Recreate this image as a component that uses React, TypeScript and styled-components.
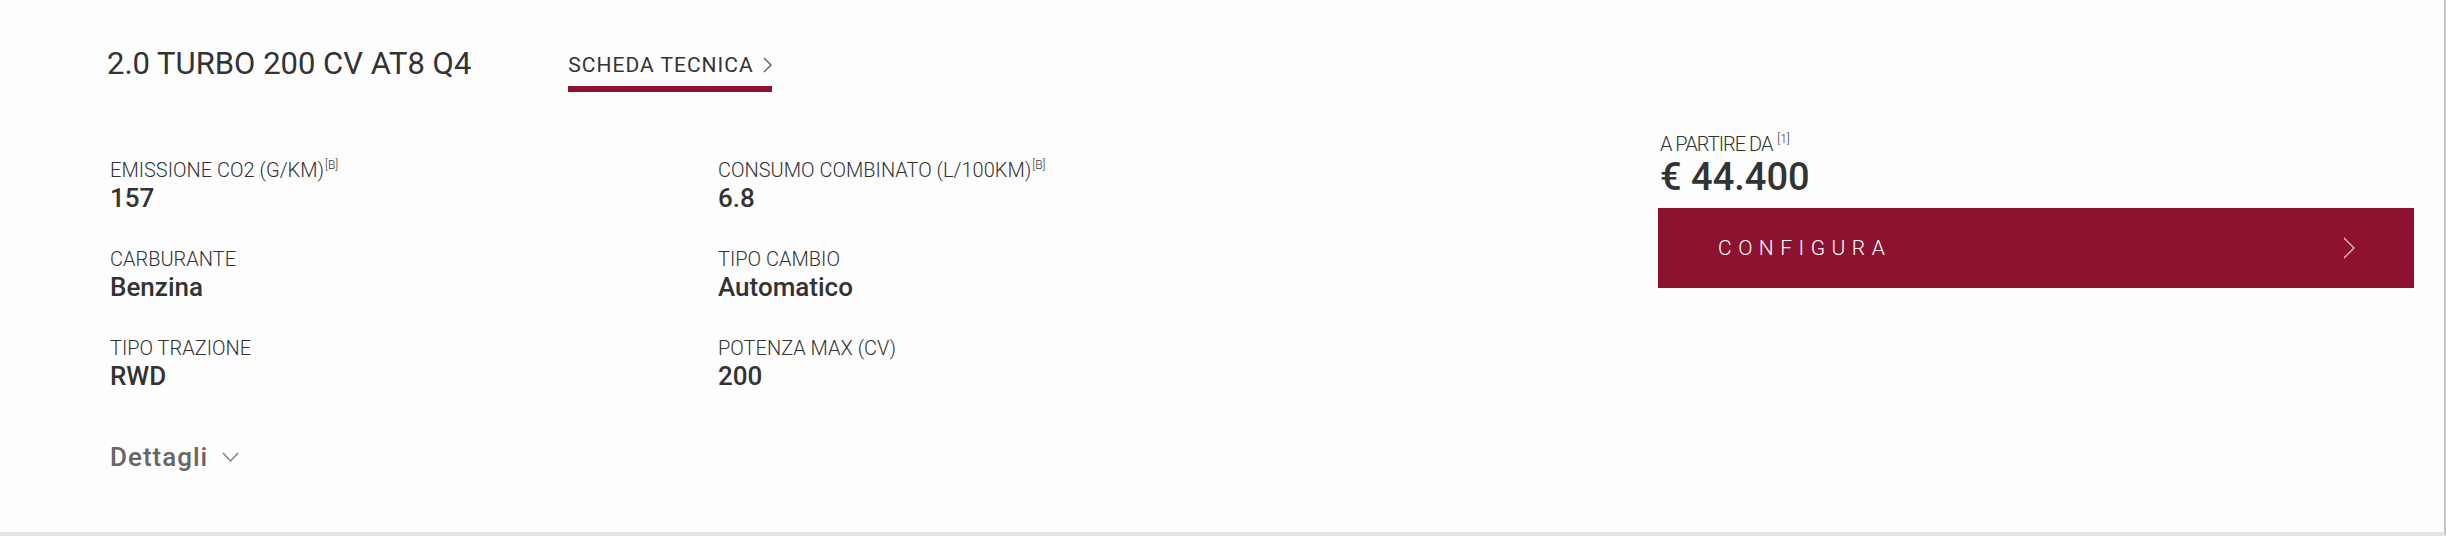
import React from "react";
import styled, { createGlobalStyle } from "styled-components";

const Global = createGlobalStyle`
  html, body { margin: 0; padding: 0; background: #fff; }
  body { font-family: Roboto, "Liberation Sans", Arial, sans-serif; color: #333; }
  * { box-sizing: border-box; }
`;

const Page = styled.div`
  width: 2446px;
  height: 536px;
  background: #fdfdfd;
  border-right: 2px solid #c4c4c4;
  border-bottom: 4px solid #e4e4e4;
  display: flex;
  padding: 0 30px 0 107px;
`;

const Left = styled.div`
  flex: 1;
  display: flex;
  flex-direction: column;
  padding-top: 45px;
`;

const HeaderRow = styled.div`
  display: flex;
  align-items: flex-start;
  gap: 97px;
`;

const Title = styled.h1`
  margin: 0;
  font-size: 31px;
  line-height: 37px;
  font-weight: 400;
  color: #333;
  white-space: nowrap;
`;

const TabLink = styled.a`
  margin-top: 7px;
  display: flex;
  align-items: center;
  gap: 9px;
  padding-bottom: 8px;
  border-bottom: 6px solid #8c1230;
  font-size: 21px;
  line-height: 26px;
  font-weight: 400;
  letter-spacing: 1px;
  color: #333;
  text-decoration: none;
  white-space: nowrap;
`;

const Specs = styled.div`
  margin-top: 61px;
  margin-left: 3px;
  display: grid;
  grid-template-columns: 608px 608px;
  row-gap: 33px;
`;

const Spec = styled.div`
  display: flex;
  flex-direction: column;
`;

const Label = styled.div<{ $tight?: boolean }>`
  font-size: 20px;
  line-height: 24px;
  font-weight: 300;
  color: #333;
  letter-spacing: ${(p) => (p.$tight ? "-1px" : "0")};
  white-space: nowrap;
`;

const Sup = styled.sup`
  font-size: 12px;
  letter-spacing: 0;
  margin-left: 1px;
`;

const Value = styled.div`
  font-size: 26px;
  line-height: 32px;
  font-weight: 500;
  color: #333;
`;

const Details = styled.button`
  margin-top: 49px;
  margin-left: 3px;
  align-self: flex-start;
  display: flex;
  align-items: center;
  gap: 14px;
  background: none;
  border: 0;
  padding: 0;
  font-family: inherit;
  font-size: 26px;
  line-height: 32px;
  font-weight: 500;
  letter-spacing: 1px;
  color: #666;
  cursor: pointer;
`;

const Right = styled.div`
  width: 756px;
  padding-top: 128px;
  display: flex;
  flex-direction: column;
`;

const PriceLabel = styled(Label)`
  margin-left: 2px;
  line-height: 22px;
`;

const Price = styled.div`
  margin-left: 2px;
  font-size: 38px;
  line-height: 44px;
  font-weight: 500;
  color: #333;
`;

const ConfigButton = styled.button`
  margin-top: 9px;
  height: 80px;
  width: 100%;
  background: #8c1230;
  border: 0;
  display: flex;
  align-items: center;
  justify-content: space-between;
  padding: 0 59px 0 60px;
  font-family: inherit;
  font-size: 21px;
  font-weight: 300;
  letter-spacing: 6.5px;
  color: #fff;
  cursor: pointer;
`;

const Chevron = ({ w, h, color, sw }: { w: number; h: number; color: string; sw: number }) => (
  <svg width={w} height={h} viewBox={`0 0 ${w} ${h}`} fill="none">
    <polyline points={`1,1 ${w - 1},${h / 2} 1,${h - 1}`} stroke={color} strokeWidth={sw} />
  </svg>
);

const ChevronDown = () => (
  <svg width="17" height="10" viewBox="0 0 17 10" fill="none">
    <polyline points="1,1 8.5,9 16,1" stroke="#777" strokeWidth="1.2" />
  </svg>
);

const specs: { label: string; sup?: string; value: string }[] = [
  { label: "EMISSIONE CO2 (G/KM)", sup: "[B]", value: "157" },
  { label: "CONSUMO COMBINATO (L/100KM)", sup: "[B]", value: "6.8" },
  { label: "CARBURANTE", value: "Benzina" },
  { label: "TIPO CAMBIO", value: "Automatico" },
  { label: "TIPO TRAZIONE", value: "RWD" },
  { label: "POTENZA MAX (CV)", value: "200" },
];

export default function App() {
  return (
    <>
      <Global />
      <Page>
        <Left>
          <HeaderRow>
            <Title>2.0 TURBO 200 CV AT8 Q4</Title>
            <TabLink href="#">
              SCHEDA TECNICA
              <Chevron w={9} h={16} color="#555" sw={1.3} />
            </TabLink>
          </HeaderRow>
          <Specs>
            {specs.map((s) => (
              <Spec key={s.label}>
                <Label>
                  {s.label}
                  {s.sup && <Sup>{s.sup}</Sup>}
                </Label>
                <Value>{s.value}</Value>
              </Spec>
            ))}
          </Specs>
          <Details>
            Dettagli
            <ChevronDown />
          </Details>
        </Left>
        <Right>
          <PriceLabel $tight>
            A PARTIRE DA <Sup>[1]</Sup>
          </PriceLabel>
          <Price>€ 44.400</Price>
          <ConfigButton>
            CONFIGURA
            <Chevron w={12} h={22} color="#e8c7cf" sw={1.2} />
          </ConfigButton>
        </Right>
      </Page>
    </>
  );
}
